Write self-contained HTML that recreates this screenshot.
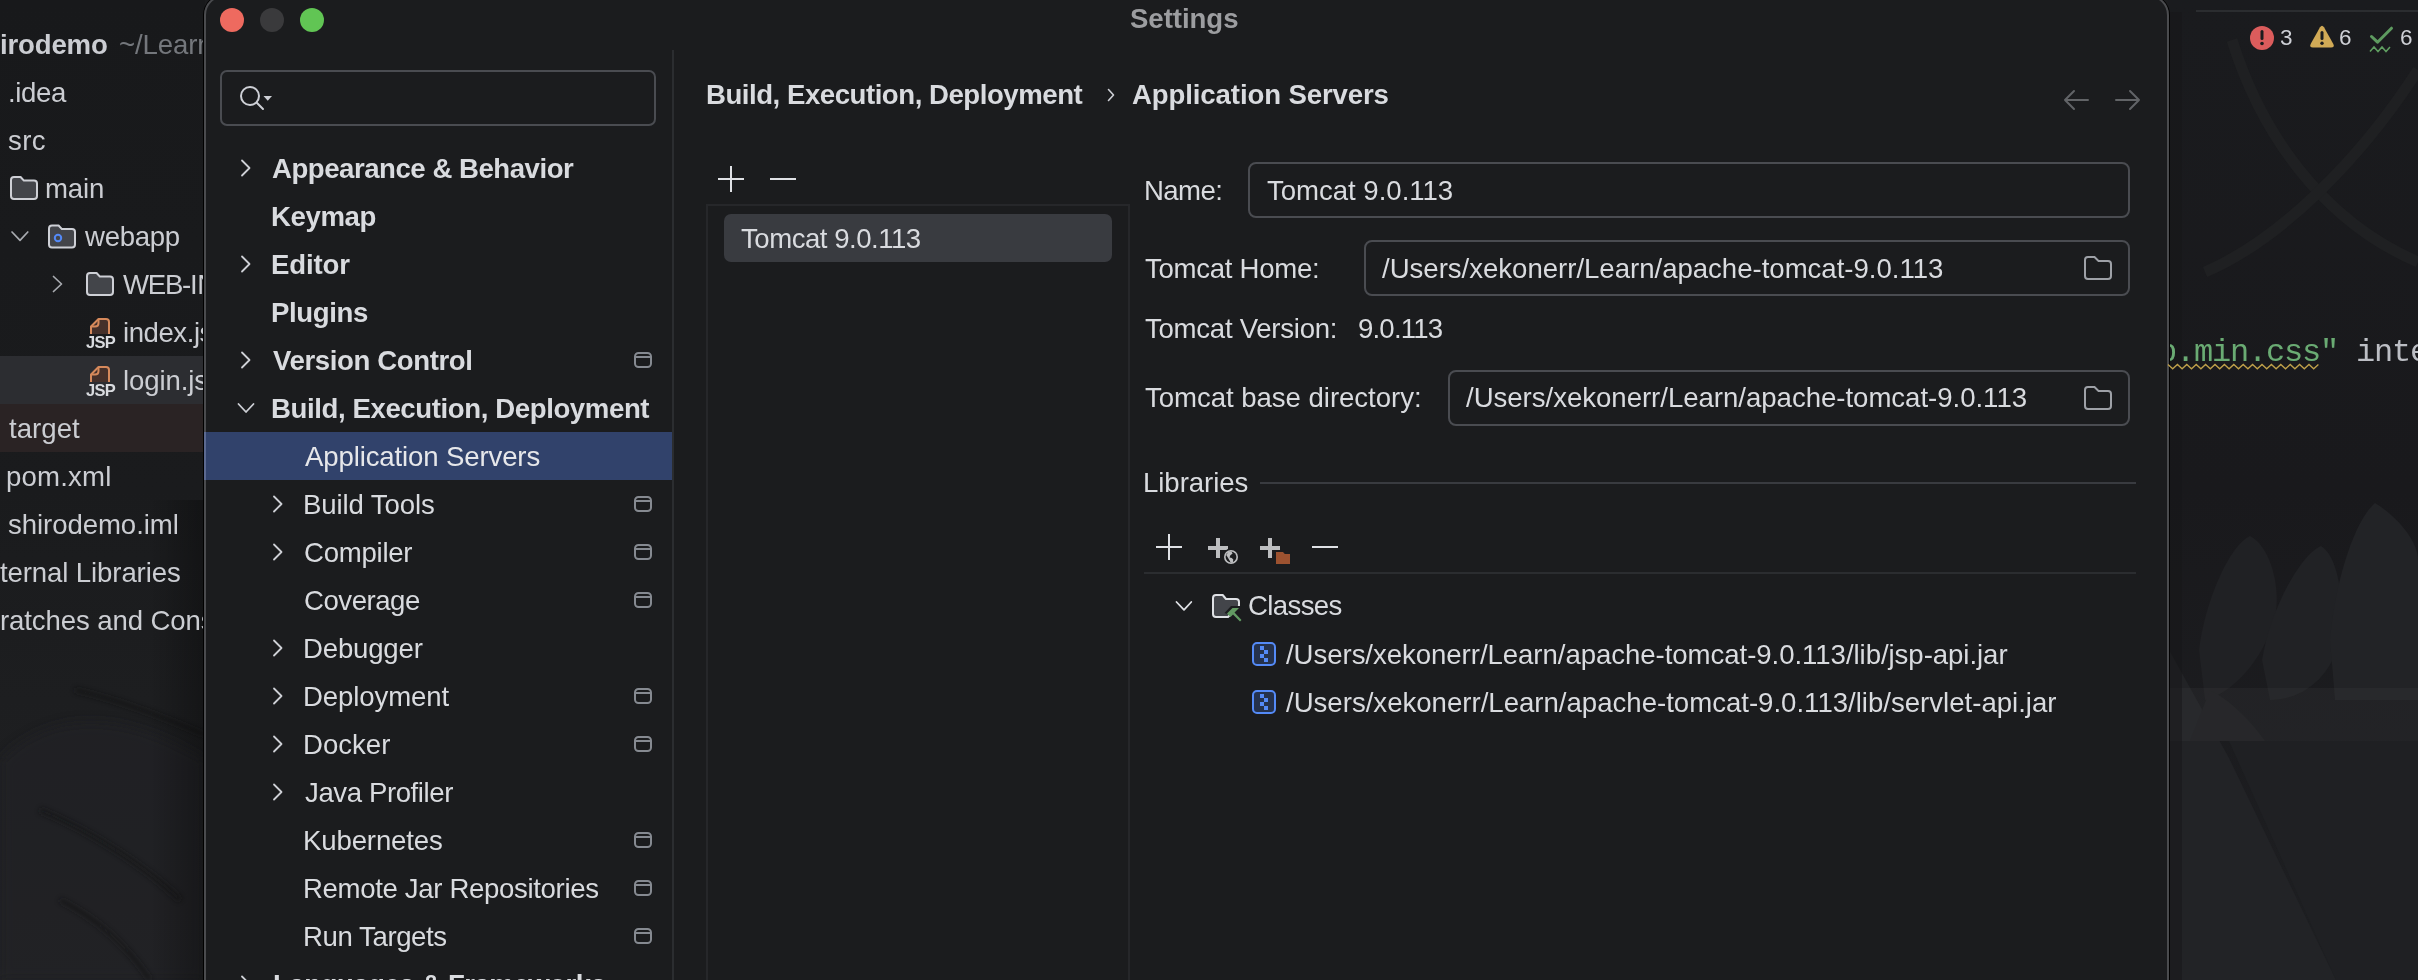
<!DOCTYPE html>
<html><head><meta charset="utf-8"><style>
html,body{margin:0;padding:0;}
body{width:2418px;height:980px;overflow:hidden;position:relative;background:#1C1D20;font-family:'Liberation Sans', sans-serif;}
.t{position:absolute;white-space:pre;will-change:transform;}
.b{position:absolute;}
</style></head><body>
<div class="b" style="left:0px;top:0px;width:2418px;height:980px;background:#1B1C1E"></div>
<svg class="b" style="left:0;top:0" width="2418" height="980" viewBox="0 0 2418 980"><defs><linearGradient id="lg1" x1="0" y1="0" x2="0" y2="1"><stop offset="0" stop-color="#18191B"/><stop offset="0.5" stop-color="#1A1B1D"/><stop offset="1" stop-color="#212224"/></linearGradient><filter id="bl2" x="-20%" y="-20%" width="140%" height="140%"><feGaussianBlur stdDeviation="2.5"/></filter><filter id="bl6" x="-20%" y="-20%" width="140%" height="140%"><feGaussianBlur stdDeviation="6"/></filter><linearGradient id="rg1" x1="0" y1="0" x2="0" y2="1"><stop offset="0" stop-color="#1A1B1E"/><stop offset="0.5" stop-color="#19191C"/><stop offset="1" stop-color="#1E1F22"/></linearGradient></defs><rect x="0" y="0" width="205" height="980" fill="url(#lg1)"/><path d="M0 760 C60 700 140 720 205 760 L205 980 L0 980 Z" fill="#232427" opacity="0.6" filter="url(#bl6)"/><path d="M75 690 C120 700 170 720 205 735" stroke="#141517" stroke-width="5" fill="none" opacity="0.6" filter="url(#bl2)"/><path d="M40 810 C90 830 150 870 180 900" stroke="#141517" stroke-width="6" fill="none" opacity="0.6" filter="url(#bl2)"/><path d="M60 900 C100 920 130 950 150 980" stroke="#161719" stroke-width="5" fill="none" opacity="0.6" filter="url(#bl2)"/><rect x="2168" y="0" width="250" height="980" fill="url(#rg1)"/><path d="M2232 40 C2260 130 2320 220 2418 262" stroke="#1F2022" stroke-width="11" fill="none"/><path d="M2205 272 C2280 240 2360 160 2418 70" stroke="#1F2022" stroke-width="11" fill="none"/><path d="M2168 648 L2229 758 L2336 980 L2168 980 Z" fill="#222326"/><path d="M2199 650 C2205 600 2230 545 2250 536 C2268 545 2280 580 2276 612 C2268 650 2240 690 2205 700 Z" fill="#202124"/><path d="M2262 660 C2270 610 2300 555 2321 546 C2338 556 2345 600 2340 640 C2330 680 2300 700 2270 700 Z" fill="#212225"/><path d="M2330 640 C2335 580 2355 520 2375 503 C2395 515 2418 540 2418 560 L2418 700 L2335 700 Z" fill="#222326"/><path d="M2229 741 L2418 741 L2418 980 L2336 980 Z" fill="#1F2023"/><path d="M2210 690 C2230 700 2250 720 2265 741 L2190 741 Z" fill="#202124"/><rect x="2168" y="688" width="250" height="53" fill="#FFFFFF" opacity="0.03"/><defs><linearGradient id="sh1" x1="0" y1="0" x2="1" y2="0"><stop offset="0" stop-color="#000" stop-opacity="0"/><stop offset="1" stop-color="#000" stop-opacity="0.3"/></linearGradient></defs><rect x="150" y="500" width="54" height="480" fill="url(#sh1)"/><rect x="2168" y="12" width="14" height="968" fill="#151618" opacity="0.5"/></svg>
<div class="b" style="left:0px;top:356px;width:205px;height:48px;background:#2C2D31"></div>
<div class="b" style="left:0px;top:404px;width:205px;height:48px;background:#2A2324"></div>
<div class="b" style="left:2196px;top:10px;width:222px;height:2px;background:#2B2D30"></div>
<div id="t1" class="t" style="left:-0.50px;top:30.63px;font-size:27.6px;line-height:27.6px;font-weight:700;color:#CBCDD2;letter-spacing:-0.169px;font-family:'Liberation Sans', sans-serif;">irodemo</div>
<div id="t2" class="t" style="left:118.50px;top:30.63px;font-size:27.6px;line-height:27.6px;font-weight:400;color:#74777C;letter-spacing:-0.120px;font-family:'Liberation Sans', sans-serif;">~/Learn/shirodemo</div>
<div id="t3" class="t" style="left:7.60px;top:78.63px;font-size:27.6px;line-height:27.6px;font-weight:400;color:#CBCDD2;letter-spacing:-0.370px;font-family:'Liberation Sans', sans-serif;">.idea</div>
<div id="t4" class="t" style="left:7.90px;top:126.63px;font-size:27.6px;line-height:27.6px;font-weight:400;color:#CBCDD2;letter-spacing:0.380px;font-family:'Liberation Sans', sans-serif;">src</div>
<div id="t5" class="t" style="left:45.10px;top:174.63px;font-size:27.6px;line-height:27.6px;font-weight:400;color:#CBCDD2;letter-spacing:-0.121px;font-family:'Liberation Sans', sans-serif;">main</div>
<div id="t6" class="t" style="left:84.60px;top:222.63px;font-size:27.6px;line-height:27.6px;font-weight:400;color:#CBCDD2;letter-spacing:-0.300px;font-family:'Liberation Sans', sans-serif;">webapp</div>
<div id="t7" class="t" style="left:123.31px;top:270.63px;font-size:27.6px;line-height:27.6px;font-weight:400;color:#CBCDD2;letter-spacing:-1.286px;font-family:'Liberation Sans', sans-serif;">WEB-</div>
<div id="t8" class="t" style="left:189.80px;top:270.63px;font-size:27.6px;line-height:27.6px;font-weight:400;color:#CBCDD2;letter-spacing:-0.500px;font-family:'Liberation Sans', sans-serif;">INF</div>
<div id="t9" class="t" style="left:122.50px;top:318.63px;font-size:27.6px;line-height:27.6px;font-weight:400;color:#CBCDD2;letter-spacing:-0.450px;font-family:'Liberation Sans', sans-serif;">index.jsp</div>
<div id="t10" class="t" style="left:122.50px;top:366.63px;font-size:27.6px;line-height:27.6px;font-weight:400;color:#CBCDD2;letter-spacing:-0.120px;font-family:'Liberation Sans', sans-serif;">login.jsp</div>
<div id="t11" class="t" style="left:8.60px;top:414.63px;font-size:27.6px;line-height:27.6px;font-weight:400;color:#CBCDD2;letter-spacing:0.030px;font-family:'Liberation Sans', sans-serif;">target</div>
<div id="t12" class="t" style="left:6.10px;top:462.63px;font-size:27.6px;line-height:27.6px;font-weight:400;color:#CBCDD2;letter-spacing:0.172px;font-family:'Liberation Sans', sans-serif;">pom.xml</div>
<div id="t13" class="t" style="left:8.10px;top:510.63px;font-size:27.6px;line-height:27.6px;font-weight:400;color:#CBCDD2;letter-spacing:-0.078px;font-family:'Liberation Sans', sans-serif;">shirodemo.iml</div>
<div id="t14" class="t" style="left:0.00px;top:558.63px;font-size:27.6px;line-height:27.6px;font-weight:400;color:#CBCDD2;letter-spacing:-0.120px;font-family:'Liberation Sans', sans-serif;">ternal Libraries</div>
<div id="t15" class="t" style="left:0.00px;top:606.63px;font-size:27.6px;line-height:27.6px;font-weight:400;color:#CBCDD2;letter-spacing:-0.120px;font-family:'Liberation Sans', sans-serif;">ratches and Consoles</div>
<div id="t16" class="t" style="left:2280.00px;top:26.95px;font-size:22.5px;line-height:22.5px;font-weight:400;color:#CED0D6;letter-spacing:0.000px;font-family:'Liberation Sans', sans-serif;">3</div>
<div id="t17" class="t" style="left:2339.00px;top:26.95px;font-size:22.5px;line-height:22.5px;font-weight:400;color:#CED0D6;letter-spacing:0.000px;font-family:'Liberation Sans', sans-serif;">6</div>
<div id="t18" class="t" style="left:2399.50px;top:26.95px;font-size:22.5px;line-height:22.5px;font-weight:400;color:#CED0D6;letter-spacing:0.000px;font-family:'Liberation Sans', sans-serif;">6</div>
<div id="t19" class="t" style="left:85.50px;top:334.03px;font-size:16.5px;line-height:16.5px;font-weight:700;color:#D9DBDF;letter-spacing:-0.700px;font-family:'Liberation Sans', sans-serif;">JSP</div>
<div id="t20" class="t" style="left:85.50px;top:382.03px;font-size:16.5px;line-height:16.5px;font-weight:700;color:#D9DBDF;letter-spacing:-0.700px;font-family:'Liberation Sans', sans-serif;">JSP</div>
<div id="t21" class="t" style="left:2158.00px;top:337.48px;font-size:32px;line-height:32px;font-weight:400;color:#6AAB73;letter-spacing:-1.200px;font-family:'Liberation Mono', monospace;">p.min.css"</div>
<div id="t22" class="t" style="left:2338.00px;top:337.48px;font-size:32px;line-height:32px;font-weight:400;color:#BCBEC4;letter-spacing:-1.200px;font-family:'Liberation Mono', monospace;"> inte</div>
<div class="b" style="left:203px;top:-6px;width:1967px;height:1100px;border-radius:21px;background:#000"></div>
<div class="b" style="left:204px;top:-5px;width:1965px;height:1100px;box-sizing:border-box;border:2px solid #4A4B4E;border-radius:20px;background:#1B1C1E"></div>
<div class="b" style="left:220px;top:8px;width:24px;height:24px;border-radius:50%;background:#EE6A5F"></div>
<div class="b" style="left:260px;top:8px;width:24px;height:24px;border-radius:50%;background:#3A3A3C"></div>
<div class="b" style="left:300px;top:8px;width:24px;height:24px;border-radius:50%;background:#61C554"></div>
<div id="t23" class="t" style="left:1129.81px;top:4.63px;font-size:27.6px;line-height:27.6px;font-weight:700;color:#9C9DA0;letter-spacing:-0.046px;font-family:'Liberation Sans', sans-serif;">Settings</div>
<div class="b" style="left:672px;top:50px;width:2px;height:940px;background:#2B2D30"></div>
<div class="b" style="left:220px;top:70px;width:436px;height:56px;box-sizing:border-box;border:2px solid #4A4C51;border-radius:7px"></div>
<div class="b" style="left:206px;top:432px;width:466px;height:48px;background:#31426B"></div>
<div class="b" style="left:204px;top:432px;width:2px;height:48px;background:#5B6990"></div>
<div id="t24" class="t" style="left:271.81px;top:154.63px;font-size:27.6px;line-height:27.6px;font-weight:700;color:#D9DBDF;letter-spacing:-0.475px;font-family:'Liberation Sans', sans-serif;">Appearance &amp; Behavior</div>
<div id="t25" class="t" style="left:270.81px;top:202.63px;font-size:27.6px;line-height:27.6px;font-weight:700;color:#D9DBDF;letter-spacing:-0.400px;font-family:'Liberation Sans', sans-serif;">Keymap</div>
<div id="t26" class="t" style="left:270.81px;top:250.63px;font-size:27.6px;line-height:27.6px;font-weight:700;color:#D9DBDF;letter-spacing:-0.167px;font-family:'Liberation Sans', sans-serif;">Editor</div>
<div id="t27" class="t" style="left:270.81px;top:298.63px;font-size:27.6px;line-height:27.6px;font-weight:700;color:#D9DBDF;letter-spacing:-0.393px;font-family:'Liberation Sans', sans-serif;">Plugins</div>
<div id="t28" class="t" style="left:272.81px;top:346.63px;font-size:27.6px;line-height:27.6px;font-weight:700;color:#D9DBDF;letter-spacing:-0.390px;font-family:'Liberation Sans', sans-serif;">Version Control</div>
<div id="t29" class="t" style="left:270.81px;top:394.63px;font-size:27.6px;line-height:27.6px;font-weight:700;color:#D9DBDF;letter-spacing:-0.404px;font-family:'Liberation Sans', sans-serif;">Build, Execution, Deployment</div>
<div id="t30" class="t" style="left:305.11px;top:442.63px;font-size:27.6px;line-height:27.6px;font-weight:400;color:#E6E7EA;letter-spacing:-0.140px;font-family:'Liberation Sans', sans-serif;">Application Servers</div>
<div id="t31" class="t" style="left:303.11px;top:490.63px;font-size:27.6px;line-height:27.6px;font-weight:400;color:#D9DBDF;letter-spacing:-0.115px;font-family:'Liberation Sans', sans-serif;">Build Tools</div>
<div id="t32" class="t" style="left:304.11px;top:538.63px;font-size:27.6px;line-height:27.6px;font-weight:400;color:#D9DBDF;letter-spacing:-0.263px;font-family:'Liberation Sans', sans-serif;">Compiler</div>
<div id="t33" class="t" style="left:304.11px;top:586.63px;font-size:27.6px;line-height:27.6px;font-weight:400;color:#D9DBDF;letter-spacing:-0.477px;font-family:'Liberation Sans', sans-serif;">Coverage</div>
<div id="t34" class="t" style="left:303.11px;top:634.63px;font-size:27.6px;line-height:27.6px;font-weight:400;color:#D9DBDF;letter-spacing:-0.191px;font-family:'Liberation Sans', sans-serif;">Debugger</div>
<div id="t35" class="t" style="left:303.11px;top:682.63px;font-size:27.6px;line-height:27.6px;font-weight:400;color:#D9DBDF;letter-spacing:-0.118px;font-family:'Liberation Sans', sans-serif;">Deployment</div>
<div id="t36" class="t" style="left:303.11px;top:730.63px;font-size:27.6px;line-height:27.6px;font-weight:400;color:#D9DBDF;letter-spacing:-0.012px;font-family:'Liberation Sans', sans-serif;">Docker</div>
<div id="t37" class="t" style="left:305.11px;top:778.63px;font-size:27.6px;line-height:27.6px;font-weight:400;color:#D9DBDF;letter-spacing:-0.413px;font-family:'Liberation Sans', sans-serif;">Java Profiler</div>
<div id="t38" class="t" style="left:303.11px;top:826.63px;font-size:27.6px;line-height:27.6px;font-weight:400;color:#D9DBDF;letter-spacing:-0.148px;font-family:'Liberation Sans', sans-serif;">Kubernetes</div>
<div id="t39" class="t" style="left:303.11px;top:874.63px;font-size:27.6px;line-height:27.6px;font-weight:400;color:#D9DBDF;letter-spacing:-0.350px;font-family:'Liberation Sans', sans-serif;">Remote Jar Repositories</div>
<div id="t40" class="t" style="left:303.11px;top:922.63px;font-size:27.6px;line-height:27.6px;font-weight:400;color:#D9DBDF;letter-spacing:-0.420px;font-family:'Liberation Sans', sans-serif;">Run Targets</div>
<div id="t41" class="t" style="left:273.00px;top:970.63px;font-size:27.6px;line-height:27.6px;font-weight:700;color:#D9DBDF;letter-spacing:-0.500px;font-family:'Liberation Sans', sans-serif;">Languages &amp; Frameworks</div>
<div id="t42" class="t" style="left:706.00px;top:80.63px;font-size:27.6px;line-height:27.6px;font-weight:700;color:#D9DBDF;letter-spacing:-0.471px;font-family:'Liberation Sans', sans-serif;">Build, Execution, Deployment</div>
<div id="t43" class="t" style="left:1132.00px;top:80.63px;font-size:27.6px;line-height:27.6px;font-weight:700;color:#D9DBDF;letter-spacing:-0.122px;font-family:'Liberation Sans', sans-serif;">Application Servers</div>
<div class="b" style="left:706px;top:204px;width:424px;height:800px;box-sizing:border-box;border:2px solid #26272A"></div>
<div class="b" style="left:724px;top:214px;width:388px;height:48px;border-radius:7px;background:#393B40"></div>
<div id="t44" class="t" style="left:740.76px;top:224.63px;font-size:27.6px;line-height:27.6px;font-weight:400;color:#D9DBDF;letter-spacing:-0.496px;font-family:'Liberation Sans', sans-serif;">Tomcat 9.0.113</div>
<div id="t45" class="t" style="left:1143.81px;top:176.63px;font-size:27.6px;line-height:27.6px;font-weight:400;color:#D9DBDF;letter-spacing:-0.580px;font-family:'Liberation Sans', sans-serif;">Name:</div>
<div class="b" style="left:1248px;top:162px;width:882px;height:56px;box-sizing:border-box;border:2px solid #4A4C51;border-radius:8px"></div>
<div id="t46" class="t" style="left:1266.81px;top:176.63px;font-size:27.6px;line-height:27.6px;font-weight:400;color:#D9DBDF;letter-spacing:-0.033px;font-family:'Liberation Sans', sans-serif;">Tomcat 9.0.113</div>
<div id="t47" class="t" style="left:1145.40px;top:254.83px;font-size:27.6px;line-height:27.6px;font-weight:400;color:#D9DBDF;letter-spacing:-0.298px;font-family:'Liberation Sans', sans-serif;">Tomcat Home:</div>
<div class="b" style="left:1364px;top:240px;width:766px;height:56px;box-sizing:border-box;border:2px solid #4A4C51;border-radius:8px"></div>
<div id="t48" class="t" style="left:1382.00px;top:254.83px;font-size:27.6px;line-height:27.6px;font-weight:400;color:#D9DBDF;letter-spacing:-0.024px;font-family:'Liberation Sans', sans-serif;">/Users/xekonerr/Learn/apache-tomcat-9.0.113</div>
<div id="t49" class="t" style="left:1145.40px;top:314.83px;font-size:27.6px;line-height:27.6px;font-weight:400;color:#D9DBDF;letter-spacing:-0.274px;font-family:'Liberation Sans', sans-serif;">Tomcat Version:</div>
<div id="t50" class="t" style="left:1358.00px;top:314.83px;font-size:27.6px;line-height:27.6px;font-weight:400;color:#D9DBDF;letter-spacing:-0.821px;font-family:'Liberation Sans', sans-serif;">9.0.113</div>
<div id="t51" class="t" style="left:1145.40px;top:384.43px;font-size:27.6px;line-height:27.6px;font-weight:400;color:#D9DBDF;letter-spacing:-0.048px;font-family:'Liberation Sans', sans-serif;">Tomcat base directory:</div>
<div class="b" style="left:1448px;top:370px;width:682px;height:56px;box-sizing:border-box;border:2px solid #4A4C51;border-radius:8px"></div>
<div id="t52" class="t" style="left:1466.00px;top:384.43px;font-size:27.6px;line-height:27.6px;font-weight:400;color:#D9DBDF;letter-spacing:-0.032px;font-family:'Liberation Sans', sans-serif;">/Users/xekonerr/Learn/apache-tomcat-9.0.113</div>
<div id="t53" class="t" style="left:1143.00px;top:468.83px;font-size:27.6px;line-height:27.6px;font-weight:400;color:#D9DBDF;letter-spacing:-0.055px;font-family:'Liberation Sans', sans-serif;">Libraries</div>
<div class="b" style="left:1260px;top:482px;width:876px;height:2px;background:#393B40"></div>
<div class="b" style="left:1144px;top:572px;width:992px;height:2px;background:#2B2D30"></div>
<div id="t54" class="t" style="left:1247.91px;top:592.13px;font-size:27.6px;line-height:27.6px;font-weight:400;color:#D9DBDF;letter-spacing:-0.634px;font-family:'Liberation Sans', sans-serif;">Classes</div>
<div id="t55" class="t" style="left:1286.00px;top:640.83px;font-size:27.6px;line-height:27.6px;font-weight:400;color:#D9DBDF;letter-spacing:-0.058px;font-family:'Liberation Sans', sans-serif;">/Users/xekonerr/Learn/apache-tomcat-9.0.113/lib/jsp-api.jar</div>
<div id="t56" class="t" style="left:1286.00px;top:688.83px;font-size:27.6px;line-height:27.6px;font-weight:400;color:#D9DBDF;letter-spacing:-0.007px;font-family:'Liberation Sans', sans-serif;">/Users/xekonerr/Learn/apache-tomcat-9.0.113/lib/servlet-api.jar</div>
<svg class="b" style="left:0;top:0" width="2418" height="980" viewBox="0 0 2418 980"><circle cx="250" cy="96" r="9" fill="none" stroke="#CED0D6" stroke-width="2"/><line x1="256.8" y1="102.8" x2="263" y2="109" stroke="#CED0D6" stroke-width="2" stroke-linecap="round"/><path d="M263.5 96 H272 L267.75 100.8 Z" fill="#CED0D6"/><path d="M242 160.5 L249.5 168 L242 175.5" fill="none" stroke="#CED0D6" stroke-width="1.8" stroke-linecap="round" stroke-linejoin="round"/><path d="M242 256.5 L249.5 264 L242 271.5" fill="none" stroke="#CED0D6" stroke-width="1.8" stroke-linecap="round" stroke-linejoin="round"/><path d="M242 352.5 L249.5 360 L242 367.5" fill="none" stroke="#CED0D6" stroke-width="1.8" stroke-linecap="round" stroke-linejoin="round"/><path d="M242 976.5 L249.5 984 L242 991.5" fill="none" stroke="#CED0D6" stroke-width="1.8" stroke-linecap="round" stroke-linejoin="round"/><path d="M274 496.5 L281.5 504 L274 511.5" fill="none" stroke="#CED0D6" stroke-width="1.8" stroke-linecap="round" stroke-linejoin="round"/><path d="M274 544.5 L281.5 552 L274 559.5" fill="none" stroke="#CED0D6" stroke-width="1.8" stroke-linecap="round" stroke-linejoin="round"/><path d="M274 640.5 L281.5 648 L274 655.5" fill="none" stroke="#CED0D6" stroke-width="1.8" stroke-linecap="round" stroke-linejoin="round"/><path d="M274 688.5 L281.5 696 L274 703.5" fill="none" stroke="#CED0D6" stroke-width="1.8" stroke-linecap="round" stroke-linejoin="round"/><path d="M274 736.5 L281.5 744 L274 751.5" fill="none" stroke="#CED0D6" stroke-width="1.8" stroke-linecap="round" stroke-linejoin="round"/><path d="M274 784.5 L281.5 792 L274 799.5" fill="none" stroke="#CED0D6" stroke-width="1.8" stroke-linecap="round" stroke-linejoin="round"/><path d="M238.5 404 L246 412 L253.5 404" fill="none" stroke="#CED0D6" stroke-width="1.8" stroke-linecap="round" stroke-linejoin="round"/><rect x="635" y="353" width="16" height="14" rx="3.5" fill="none" stroke="#868A91" stroke-width="2"/><line x1="635" y1="357" x2="651" y2="357" stroke="#868A91" stroke-width="2"/><rect x="635" y="497" width="16" height="14" rx="3.5" fill="none" stroke="#868A91" stroke-width="2"/><line x1="635" y1="501" x2="651" y2="501" stroke="#868A91" stroke-width="2"/><rect x="635" y="545" width="16" height="14" rx="3.5" fill="none" stroke="#868A91" stroke-width="2"/><line x1="635" y1="549" x2="651" y2="549" stroke="#868A91" stroke-width="2"/><rect x="635" y="593" width="16" height="14" rx="3.5" fill="none" stroke="#868A91" stroke-width="2"/><line x1="635" y1="597" x2="651" y2="597" stroke="#868A91" stroke-width="2"/><rect x="635" y="689" width="16" height="14" rx="3.5" fill="none" stroke="#868A91" stroke-width="2"/><line x1="635" y1="693" x2="651" y2="693" stroke="#868A91" stroke-width="2"/><rect x="635" y="737" width="16" height="14" rx="3.5" fill="none" stroke="#868A91" stroke-width="2"/><line x1="635" y1="741" x2="651" y2="741" stroke="#868A91" stroke-width="2"/><rect x="635" y="833" width="16" height="14" rx="3.5" fill="none" stroke="#868A91" stroke-width="2"/><line x1="635" y1="837" x2="651" y2="837" stroke="#868A91" stroke-width="2"/><rect x="635" y="881" width="16" height="14" rx="3.5" fill="none" stroke="#868A91" stroke-width="2"/><line x1="635" y1="885" x2="651" y2="885" stroke="#868A91" stroke-width="2"/><rect x="635" y="929" width="16" height="14" rx="3.5" fill="none" stroke="#868A91" stroke-width="2"/><line x1="635" y1="933" x2="651" y2="933" stroke="#868A91" stroke-width="2"/><path d="M1108.5 89.5 L1113.5 95 L1108.5 100.5" fill="none" stroke="#CED0D6" stroke-width="1.6" stroke-linecap="round" stroke-linejoin="round"/><path d="M2065 100 H2088 M2074 91 L2065 100 L2074 109" fill="none" stroke="#626467" stroke-width="2" stroke-linecap="round" stroke-linejoin="round"/><path d="M2116 100 H2139 M2130 91 L2139 100 L2130 109" fill="none" stroke="#626467" stroke-width="2" stroke-linecap="round" stroke-linejoin="round"/><path d="M718 179 H744 M731 166 V192 M770 179 H796" fill="none" stroke="#DFE1E5" stroke-width="2"/><path d="M2085 260 Q2085 257 2088 257 H2094.5 L2098.5 261 H2108 Q2111 261 2111 264 V276 Q2111 279 2108 279 H2088 Q2085 279 2085 276 Z" fill="none" stroke="#9EA1A7" stroke-width="2"/><path d="M2085 390 Q2085 387 2088 387 H2094.5 L2098.5 391 H2108 Q2111 391 2111 394 V406 Q2111 409 2108 409 H2088 Q2085 409 2085 406 Z" fill="none" stroke="#9EA1A7" stroke-width="2"/><path d="M1156 547 H1182 M1169 534 V560 M1312 547 H1338" fill="none" stroke="#DFE1E5" stroke-width="2"/><path d="M1208 548 H1228 M1218 538 V558" fill="none" stroke="#BDBEC0" stroke-width="4"/><circle cx="1231" cy="557" r="8.5" fill="#1B1C1E"/><circle cx="1231" cy="557" r="7" fill="#BDBEC0"/><circle cx="1231" cy="557" r="5.4" fill="#1B1C1E"/><path d="M1226.2 555 L1228.3 552 L1231.3 551.2 L1232.6 553.4 L1230.2 555.6 L1229.6 557.4 L1231.8 557.9 L1233.3 559.6 L1232.8 562.8 L1230.8 562.8 L1229.4 560.2 L1227.8 557.6 Z" fill="#BDBEC0"/><path d="M1260 548 H1280 M1270 538 V558" fill="none" stroke="#BDBEC0" stroke-width="4"/><path d="M1274.5 550.5 H1284 L1286 552.5 H1291.5 V565.5 H1274.5 Z" fill="#1B1C1E"/><path d="M1276 552 H1283 L1284.8 554 H1290 V564 H1276 Z" fill="#9C5230"/><path d="M1176.5 602 L1184 609.8 L1191.3 602" fill="none" stroke="#DFE1E5" stroke-width="1.8" stroke-linecap="round" stroke-linejoin="round"/><path d="M1213 598 Q1213 595 1216 595 H1222.7 L1226 599 H1236 Q1239 599 1239 602 V606 L1228 617 H1216 Q1213 617 1213 614 Z" fill="#43454A" stroke="#DFE1E5" stroke-width="2" stroke-linejoin="round"/><path d="M1224.5 613 L1231 606 H1241 L1241 608 L1236 613 L1241 618.5 V619 Z" fill="#1B1C1E"/><path d="M1227 613.5 L1232.5 608 H1239 L1234.5 612.5 L1241.5 620 L1240 621.5 L1233 614.5 L1230.5 617 Z" fill="#629A62"/><rect x="1253" y="643" width="22" height="22" rx="4" fill="#25324D" stroke="#548AF7" stroke-width="2"/><rect x="1260" y="646" width="4" height="4" fill="#548AF7"/><rect x="1264" y="650" width="4" height="4" fill="#548AF7"/><rect x="1260" y="654" width="4" height="4" fill="#548AF7"/><rect x="1264" y="658" width="4" height="4" fill="#548AF7"/><rect x="1253" y="691" width="22" height="22" rx="4" fill="#25324D" stroke="#548AF7" stroke-width="2"/><rect x="1260" y="694" width="4" height="4" fill="#548AF7"/><rect x="1264" y="698" width="4" height="4" fill="#548AF7"/><rect x="1260" y="702" width="4" height="4" fill="#548AF7"/><rect x="1264" y="706" width="4" height="4" fill="#548AF7"/><path d="M11 180 Q11 177 14 177 H20.6 L23.9 180.6 H34 Q37 180.6 37 183.6 V196 Q37 199 34 199 H14 Q11 199 11 196 Z" fill="#43454A" stroke="#CED0D6" stroke-width="2" stroke-linejoin="round"/><path d="M49 228.5 Q49 225.5 52 225.5 H58.6 L61.9 229.1 H72 Q75 229.1 75 232.1 V244.5 Q75 247.5 72 247.5 H52 Q49 247.5 49 244.5 Z" fill="#43454A" stroke="#CED0D6" stroke-width="2" stroke-linejoin="round"/><circle cx="58" cy="238" r="3.2" fill="none" stroke="#548AF7" stroke-width="2"/><path d="M87 276 Q87 273 90 273 H96.6 L99.9 276.6 H110 Q113 276.6 113 279.6 V292 Q113 295 110 295 H90 Q87 295 87 292 Z" fill="#43454A" stroke="#CED0D6" stroke-width="2" stroke-linejoin="round"/><path d="M12 232 L20 240.3 L27.8 232" fill="none" stroke="#A8ABB0" stroke-width="1.7" stroke-linecap="round" stroke-linejoin="round"/><path d="M53.5 276.5 L61.5 284 L53.5 291.5" fill="none" stroke="#A8ABB0" stroke-width="1.7" stroke-linecap="round" stroke-linejoin="round"/><g transform="translate(0 0)"><path d="M91 334 V326.5 L98.5 319 H106 Q109 319 109 322 V334" fill="#45302A" stroke="#D6895B" stroke-width="2" stroke-linejoin="round"/><path d="M98.5 319 V323 Q98.5 326.5 95 326.5 H91" fill="none" stroke="#D6895B" stroke-width="2"/></g><g transform="translate(0 48)"><path d="M91 334 V326.5 L98.5 319 H106 Q109 319 109 322 V334" fill="#45302A" stroke="#D6895B" stroke-width="2" stroke-linejoin="round"/><path d="M98.5 319 V323 Q98.5 326.5 95 326.5 H91" fill="none" stroke="#D6895B" stroke-width="2"/></g><circle cx="2262" cy="38" r="12" fill="#DB5C5C"/><rect x="2260.5" y="30" width="3" height="10" rx="1.5" fill="#1B1C1E"/><circle cx="2262" cy="43.5" r="1.8" fill="#1B1C1E"/><path d="M2320 27.2 Q2322 24.2 2324 27.2 L2333.2 43.8 Q2335.2 47.6 2331 47.6 H2313 Q2308.8 47.6 2310.8 43.8 Z" fill="#D1AA56"/><rect x="2320.5" y="31" width="3" height="9" rx="1.5" fill="#1B1C1E"/><circle cx="2322" cy="43.3" r="1.7" fill="#1B1C1E"/><path d="M2371.5 36.5 L2377.5 42.2 L2391.5 28.2" fill="none" stroke="#5E9B60" stroke-width="3" stroke-linecap="round" stroke-linejoin="round"/><path d="M2370 51.5 L2374 47 L2378 51.5 L2382 47 L2386 51.5 L2390 47" fill="none" stroke="#5F9E61" stroke-width="1.5"/><polyline points="2168.0 364.5 2172.7 368.8 2177.4 364.5 2182.1 368.8 2186.8 364.5 2191.5 368.8 2196.2 364.5 2200.9 368.8 2205.6 364.5 2210.3 368.8 2215.0 364.5 2219.7 368.8 2224.4 364.5 2229.1 368.8 2233.8 364.5 2238.5 368.8 2243.2 364.5 2247.9 368.8 2252.6 364.5 2257.3 368.8 2262.0 364.5 2266.7 368.8 2271.4 364.5 2276.1 368.8 2280.8 364.5 2285.5 368.8 2290.2 364.5 2294.9 368.8 2299.6 364.5 2304.3 368.8 2309.0 364.5 2313.7 368.8 2318.4 364.5" fill="none" stroke="#BFA04A" stroke-width="1.3"/></svg>
</body></html>
